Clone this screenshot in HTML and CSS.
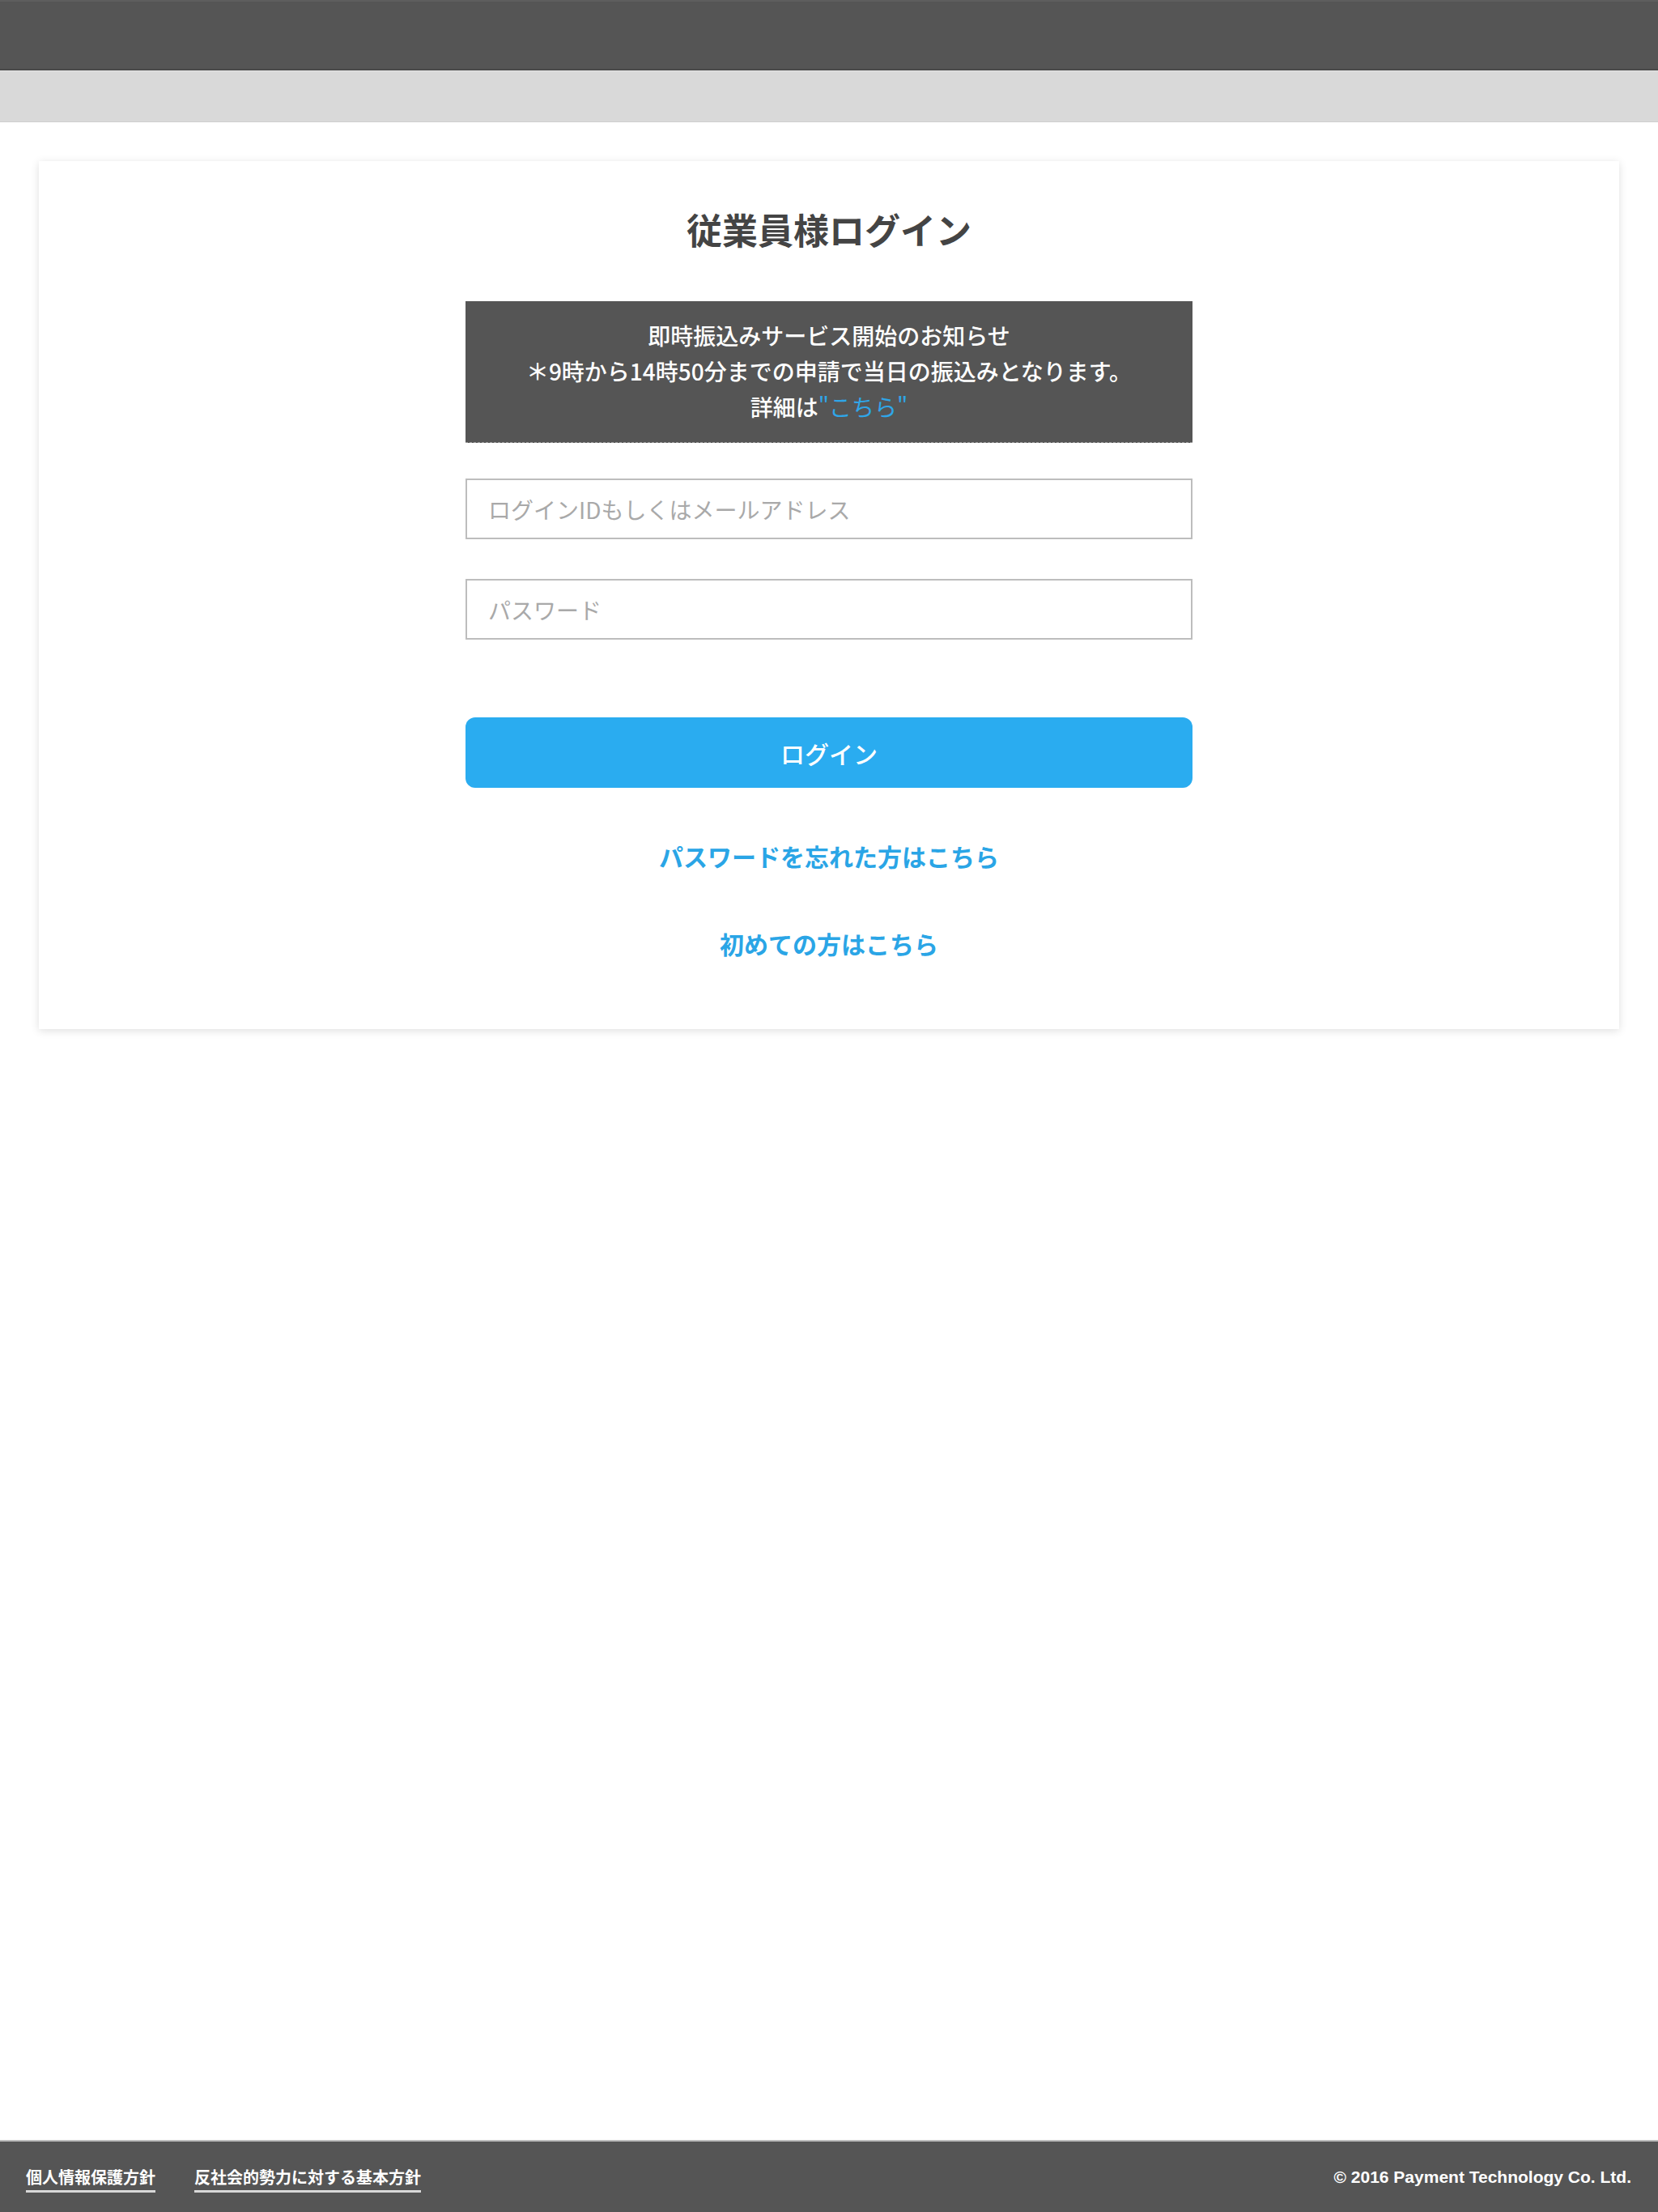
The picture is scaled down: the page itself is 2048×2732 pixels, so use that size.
FILE: index.html
```html
<!DOCTYPE html>
<html lang="ja">
<head>
<meta charset="utf-8">
<title>従業員様ログイン</title>
<link rel="stylesheet" href="styles.css">
</head>
<body>
<div class="page">
  <header class="topbar"></header>
  <div class="subbar"></div>
  <main class="main">
    <section class="card">
      <h1 class="title">従業員様ログイン</h1>
      <div class="notice">
        <p>即時振込みサービス開始のお知らせ</p>
        <p>＊9時から14時50分までの申請で当日の振込みとなります。</p>
        <p>詳細は<a class="notice-link" href="#">"こちら"</a></p>
      </div>
      <form class="form">
        <input class="field" type="text" placeholder="ログインIDもしくはメールアドレス">
        <input class="field" type="password" placeholder="パスワード">
        <button class="btn" type="button">ログイン</button>
      </form>
      <a class="link link-forgot" href="#">パスワードを忘れた方はこちら</a>
      <a class="link link-first" href="#">初めての方はこちら</a>
    </section>
  </main>
  <footer class="footer">
    <nav class="footer-links">
      <a href="#">個人情報保護方針</a>
      <a href="#">反社会的勢力に対する基本方針</a>
    </nav>
    <div class="copyright">© 2016 Payment Technology Co. Ltd.</div>
  </footer>
</div>
</body>
</html>
```
FILE: styles.css
```css
* { box-sizing: border-box; }
html, body { margin: 0; padding: 0; background: #fff; }
body {
  font-family: "Noto Sans CJK JP", "Noto Sans", sans-serif;
  color: #444;
}
.page {
  min-height: 2732px;
  display: flex;
  flex-direction: column;
}
.topbar {
  height: 87px;
  background: #555;
  border-top: 2px solid #5e5e5e;
  border-bottom: 2px solid #4a4a4a;
}
.subbar {
  height: 64px;
  background: #d9d9d9;
  border-top: 1px solid #e4e4e4;
  border-bottom: 1px solid #cfcfcf;
}
.main {
  flex: 1;
  padding: 48px 48px 0 48px;
}
.card {
  background: #fff;
  box-shadow: 0 2px 10px rgba(0,0,0,0.13);
  padding: 58px 0 84px;
  display: flex;
  flex-direction: column;
  align-items: center;
}
.title {
  margin: 0;
  font-size: 44px;
  line-height: 52px;
  font-weight: 700;
  color: #444;
}
.notice {
  margin-top: 63px;
  width: 898px;
  background: #555;
  border-bottom: 1px dashed #9a9a9a;
  padding: 20px 0 22px;
  text-align: center;
  color: #fff;
  font-size: 28px;
  line-height: 44px;
  font-weight: 500;
}
.notice p { margin: 0; }
.notice-link {
  color: #2fa6e8;
  text-decoration: none;
  font-weight: 400;
}
.form {
  width: 898px;
  margin-top: 44px;
  display: flex;
  flex-direction: column;
}
.field {
  height: 75px;
  border: 2px solid #bdbdbd;
  border-radius: 0;
  padding: 0 26px;
  font-family: inherit;
  font-size: 28px;
  color: #444;
  background: #fff;
  outline: none;
}
.field + .field { margin-top: 49px; }
.field::placeholder { color: #a9a9a9; }
.btn {
  margin-top: 96px;
  height: 87px;
  border: none;
  border-radius: 12px;
  background: #2aacf0;
  color: #fff;
  font-family: inherit;
  font-size: 30px;
  font-weight: 500;
  cursor: pointer;
}
.link {
  display: block;
  color: #2aa5e6;
  font-size: 30px;
  line-height: 44px;
  font-weight: 700;
  text-decoration: none;
}
.link-forgot { margin-top: 62px; }
.link-first { margin-top: 64px; }
.footer {
  height: 89px;
  background: #555;
  border-top: 2px solid #bdbdbd;
  display: flex;
  align-items: center;
  justify-content: space-between;
  padding: 0 33px 0 32px;
}
.footer-links {
  display: flex;
  gap: 48px;
  padding-top: 6px;
}
.footer-links a {
  color: #fff;
  font-size: 20px;
  line-height: 28px;
  font-weight: 700;
  text-decoration: none;
  border-bottom: 3px solid #d8d8d8;
  padding-bottom: 2px;
}
.copyright {
  color: #fff;
  font-family: "Liberation Sans", Arial, sans-serif;
  font-size: 21px;
  font-weight: 700;
}
```
